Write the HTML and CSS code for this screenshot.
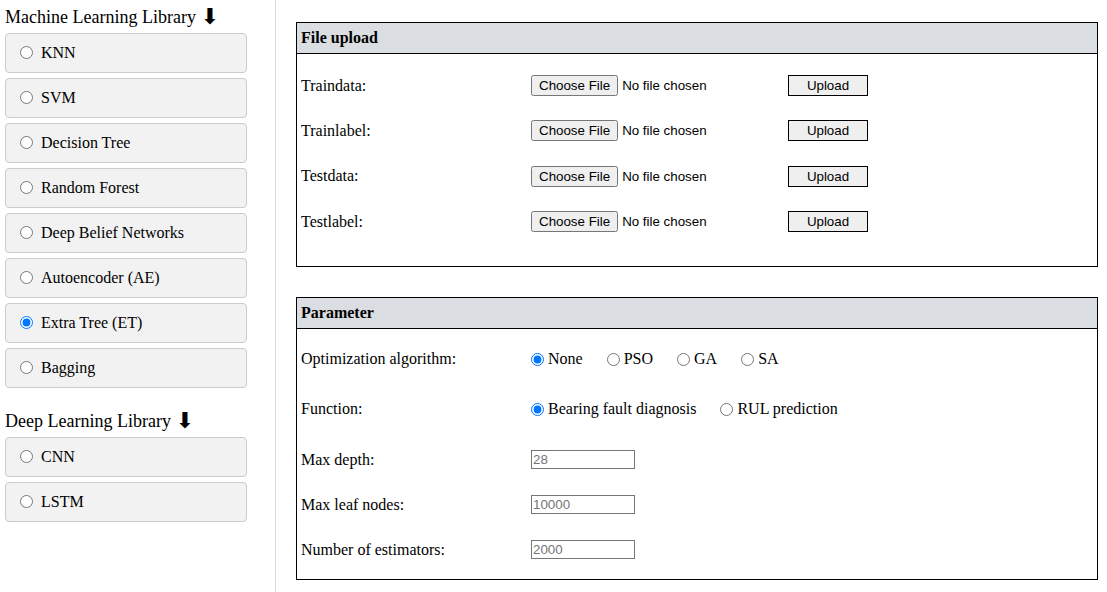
FILE: index.html
```html
<!DOCTYPE html>
<html lang="en">
<head>
<meta charset="utf-8">
<title>Fault diagnosis</title>
<link rel="stylesheet" href="styles.css">
</head>
<body>
<div class="page">
  <aside class="sidebar">
    <h2 class="lib-title">Machine Learning Library <span class="arrow">⬇</span></h2>
    <div class="options">
      <label class="option"><input type="radio" name="model"><span>KNN</span></label>
      <label class="option"><input type="radio" name="model"><span>SVM</span></label>
      <label class="option"><input type="radio" name="model"><span>Decision Tree</span></label>
      <label class="option"><input type="radio" name="model"><span>Random Forest</span></label>
      <label class="option"><input type="radio" name="model"><span>Deep Belief Networks</span></label>
      <label class="option"><input type="radio" name="model"><span>Autoencoder (AE)</span></label>
      <label class="option"><input type="radio" name="model" checked><span>Extra Tree (ET)</span></label>
      <label class="option"><input type="radio" name="model"><span>Bagging</span></label>
    </div>
    <h2 class="lib-title lib-title-second">Deep Learning Library <span class="arrow">⬇</span></h2>
    <div class="options">
      <label class="option"><input type="radio" name="model"><span>CNN</span></label>
      <label class="option"><input type="radio" name="model"><span>LSTM</span></label>
    </div>
  </aside>
  <main class="content">
    <section class="panel">
      <div class="panel-header">File upload</div>
      <div class="panel-body upload-body">
        <div class="upload-row"><span class="field-label">Traindata:</span><input type="file" class="file-input"><button class="upload-btn">Upload</button></div>
        <div class="upload-row"><span class="field-label">Trainlabel:</span><input type="file" class="file-input"><button class="upload-btn">Upload</button></div>
        <div class="upload-row"><span class="field-label">Testdata:</span><input type="file" class="file-input"><button class="upload-btn">Upload</button></div>
        <div class="upload-row"><span class="field-label">Testlabel:</span><input type="file" class="file-input"><button class="upload-btn">Upload</button></div>
      </div>
    </section>
    <section class="panel">
      <div class="panel-header">Parameter</div>
      <div class="panel-body param-body">
        <div class="param-row param-row-radio">
          <span class="field-label">Optimization algorithm:</span>
          <div class="choices">
            <label class="choice"><input type="radio" name="opt" checked><span>None</span></label>
            <label class="choice"><input type="radio" name="opt"><span>PSO</span></label>
            <label class="choice"><input type="radio" name="opt"><span>GA</span></label>
            <label class="choice"><input type="radio" name="opt"><span>SA</span></label>
          </div>
        </div>
        <div class="param-row param-row-radio">
          <span class="field-label">Function:</span>
          <div class="choices">
            <label class="choice"><input type="radio" name="func" checked><span>Bearing fault diagnosis</span></label>
            <label class="choice"><input type="radio" name="func"><span>RUL prediction</span></label>
          </div>
        </div>
        <div class="param-row param-row-first-input">
          <span class="field-label">Max depth:</span>
          <input type="text" class="num-input" placeholder="28">
        </div>
        <div class="param-row">
          <span class="field-label">Max leaf nodes:</span>
          <input type="text" class="num-input" placeholder="10000">
        </div>
        <div class="param-row">
          <span class="field-label">Number of estimators:</span>
          <input type="text" class="num-input" placeholder="2000">
        </div>
      </div>
    </section>
  </main>
</div>
</body>
</html>
```

FILE: styles.css
```css
html, body {
  margin: 0;
  padding: 0;
  background: #ffffff;
}

body {
  font-family: "Liberation Serif", "Times New Roman", serif;
  font-size: 16px;
  color: #000;
}

.page {
  display: flex;
  align-items: stretch;
  min-height: 592px;
}

.sidebar {
  width: 276px;
  flex: none;
  box-sizing: border-box;
  padding: 6px 0 0 5px;
  border-right: 1px solid #dcdcdc;
}

.lib-title {
  margin: 0 0 5px 0;
  font-size: 18px;
  font-weight: normal;
  line-height: 22px;
  height: 22px;
  white-space: nowrap;
}

.lib-title-second {
  margin-top: 22px;
  margin-bottom: 5px;
}

.arrow {
  font-family: "DejaVu Sans", sans-serif;
  font-size: 22px;
  line-height: 0;
  vertical-align: -1px;
}

.options {
  display: flex;
  flex-direction: column;
  gap: 5px;
}

.option {
  display: flex;
  align-items: center;
  box-sizing: border-box;
  width: 242px;
  height: 40px;
  padding-left: 14px;
  padding-bottom: 1px;
  background: #f2f2f2;
  border: 1px solid #cccccc;
  border-radius: 4px;
  cursor: pointer;
}

.option input {
  margin: 0 8px 0 0;
  width: 13px;
  height: 13px;
}

.content {
  flex: 1;
  box-sizing: border-box;
  padding: 22px 9px 0 20px;
  display: flex;
  flex-direction: column;
  gap: 30px;
}

.panel {
  border: 1px solid #000;
}

.panel-header {
  height: 30px;
  line-height: 30px;
  padding-left: 4px;
  background: #dadde1;
  border-bottom: 1px solid #000;
  font-weight: bold;
}

.panel-body {
  padding-left: 4px;
}

.upload-body {
  padding-top: 9px;
  padding-bottom: 22px;
}

.upload-row {
  display: grid;
  grid-template-columns: 230px 257px 80px;
  align-items: center;
  height: 45.33px;
}

.field-label {
  white-space: nowrap;
}

.file-input {
  margin: 0;
  font-family: "Liberation Sans", Arial, sans-serif;
  font-size: 13.333px;
}

.upload-btn {
  box-sizing: border-box;
  width: 80px;
  height: 21px;
  margin: 0;
  padding: 0;
  background: #efefef;
  border: 1px solid #000;
  font-family: "Liberation Sans", Arial, sans-serif;
  font-size: 13.333px;
  color: #000;
}

.param-body {
  padding-top: 5px;
  padding-bottom: 7px;
}

.param-row {
  display: grid;
  grid-template-columns: 230px 1fr;
  align-items: center;
  height: 45px;
}

.param-row-radio {
  height: 50px;
}

.param-row-first-input {
  margin-top: 3px;
}

.choices {
  display: flex;
  align-items: center;
  gap: 24px;
}

.choice {
  display: flex;
  align-items: center;
  white-space: nowrap;
}

.choice input {
  margin: 0 4px 0 0;
  width: 13px;
  height: 13px;
}

.num-input {
  box-sizing: border-box;
  width: 104px;
  height: 19px;
  margin: 0;
  padding: 0 1px;
  border: 1px solid #767676;
  font-family: "Liberation Sans", Arial, sans-serif;
  font-size: 13.333px;
}

.num-input::placeholder {
  color: #757575;
}
```
